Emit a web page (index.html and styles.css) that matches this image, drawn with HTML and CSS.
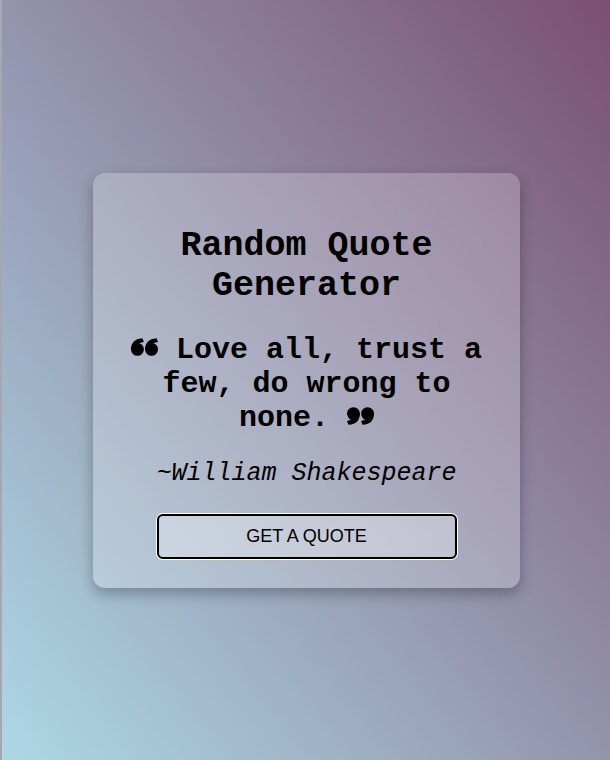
FILE: index.html
```html
<!DOCTYPE html>
<html lang="en">
<head>
<meta charset="utf-8">
<title>Random Quote Generator</title>
<link rel="stylesheet" href="styles.css">
</head>
<body>
  <main class="card">
    <h1 class="title">Random Quote Generator</h1>
    <p class="quote">
      <svg class="qicon qicon-left" viewBox="0 0 26 17" aria-hidden="true">
        <g>
          <circle cx="6.2" cy="10.8" r="6.2"/>
          <path d="M0 11.5 C0 4.5 3.2 0.6 11 0 L12.4 3.8 C8.6 4.4 7.2 5.6 7 7 L6 7.5 Z"/>
        </g>
        <g transform="translate(13.6 0)">
          <circle cx="6.2" cy="10.8" r="6.2"/>
          <path d="M0 11.5 C0 4.5 3.2 0.6 11 0 L12.4 3.8 C8.6 4.4 7.2 5.6 7 7 L6 7.5 Z"/>
        </g>
      </svg>
      Love all, trust a few, do wrong to none.
      <svg class="qicon qicon-right" viewBox="0 0 26 17" aria-hidden="true">
        <g transform="rotate(180 13 8.5)">
          <g>
            <circle cx="6.2" cy="10.8" r="6.2"/>
            <path d="M0 11.5 C0 4.5 3.2 0.6 11 0 L12.4 3.8 C8.6 4.4 7.2 5.6 7 7 L6 7.5 Z"/>
          </g>
          <g transform="translate(13.6 0)">
            <circle cx="6.2" cy="10.8" r="6.2"/>
            <path d="M0 11.5 C0 4.5 3.2 0.6 11 0 L12.4 3.8 C8.6 4.4 7.2 5.6 7 7 L6 7.5 Z"/>
          </g>
        </g>
      </svg>
    </p>
    <p class="author">~William Shakespeare</p>
    <button class="btn" type="button">GET A QUOTE</button>
  </main>
</body>
</html>
```

FILE: styles.css
```css
html, body {
  margin: 0;
  padding: 0;
}

body {
  height: 760px;
  box-sizing: border-box;
  border-left: 2px solid #a4a7b4;
  padding-left: 1px;
  background: linear-gradient(to top right, #add8e6, #7a4f73);
  display: flex;
  align-items: center;
  justify-content: center;
  font-family: "Liberation Mono", "Courier New", monospace;
  color: #000;
}

.card {
  width: 427px;
  height: 415px;
  box-sizing: border-box;
  padding: 53px 20px 0;
  border-radius: 12px;
  background: rgba(255, 255, 255, 0.22);
  box-shadow: 0 6px 14px rgba(0, 0, 0, 0.28);
  display: flex;
  flex-direction: column;
  align-items: center;
  text-align: center;
}

.title {
  margin: 0;
  font-size: 35px;
  line-height: 40px;
  font-weight: bold;
  width: 300px;
}

.quote {
  margin: 27px 0 0;
  font-size: 30px;
  line-height: 34px;
  font-weight: bold;
  width: 360px;
}

.qicon {
  width: 27px;
  height: 18px;
  fill: #000;
}

.qicon-left {
  vertical-align: 2px;
}

.qicon-right {
  vertical-align: 1px;
}

.author {
  margin: 25px 0 0;
  font-size: 25px;
  line-height: 28px;
  font-style: italic;
}

.btn {
  margin-top: 26px;
  width: 300px;
  height: 45px;
  border: 2px solid #000;
  border-radius: 6px;
  box-shadow: 0 0 0 1px #fff;
  background: rgba(255, 255, 255, 0.3);
  font-family: "Liberation Sans", Arial, sans-serif;
  font-size: 18px;
  color: #000;
  cursor: pointer;
}
```
